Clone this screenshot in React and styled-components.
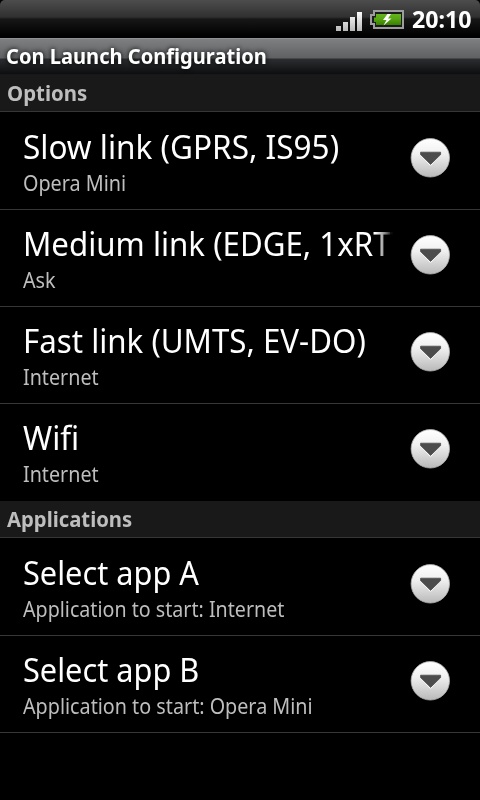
import React from 'react';
import styled, { createGlobalStyle } from 'styled-components';

const GlobalStyle = createGlobalStyle`
  body {
    margin: 0;
    background: #000000;
    font-family: 'Noto Sans', sans-serif;
    overflow: hidden;
  }
`;

const Screen = styled.div`
  width: 480px;
  height: 800px;
  background: #000000;
  overflow: hidden;
`;

const StatusBar = styled.div`
  height: 38px;
  box-sizing: border-box;
  padding-right: 9px;
  display: flex;
  justify-content: flex-end;
  align-items: center;
  border-radius: 5px 5px 0 0;
  background: linear-gradient(#4d4d4d 0px, #303030 17px, #171717 19px, #000000 36px);
`;

const Signal = styled.svg`
  width: 27px;
  height: 20px;
  margin-top: 4px;
  margin-right: 7px;
`;

const Battery = styled.svg`
  width: 34px;
  height: 20px;
  margin-top: 2px;
  margin-right: 8px;
`;

const Fit = styled.span`
  display: inline-block;
  transform: scaleX(${({ $fit }) => $fit || 1});
  transform-origin: left center;
  white-space: nowrap;
`;

const Clock = styled.div`
  width: 59px;
  height: 38px;
  font-size: 24px;
  font-weight: 700;
  line-height: 38px;
  color: #FFFFFF;
`;

const TitleBar = styled.div`
  height: 37px;
  box-sizing: border-box;
  padding-left: 6px;
  border-top: 1px solid #8f9192;
  background: linear-gradient(#7d7f80 0px, #5f6163 19px, #2b2d30 20px, #0c0e0f 35px, #202222 36px);
  font-size: 21px;
  font-weight: 700;
  line-height: 34px;
  color: #FFFFFF;
  text-shadow: 0px 0px 5px #000000;
`;

const Category = styled.div`
  height: 37px;
  box-sizing: border-box;
  margin-bottom: 1px;
  padding-left: 7px;
  background: #191919;
  border-bottom: 1px solid #363636;
  font-size: 21px;
  font-weight: 700;
  line-height: 37px;
  color: #BEBEBE;
`;

const Row = styled.div`
  height: 97px;
  box-sizing: border-box;
  padding: 0 29px 0 23px;
  display: flex;
  justify-content: space-between;
  border-bottom: 1px solid ${({ $last }) => ($last ? '#000000' : '#363636')};
`;

const Texts = styled.div`
  width: 370px;
  padding-top: 12px;
  overflow: hidden;
  mask-image: linear-gradient(to right, #000 0, #000 352px, rgba(0, 0, 0, 0.6) 361px, transparent 370px);
`;

const RowTitle = styled.div`
  height: 44px;
  font-size: 33px;
  line-height: 44px;
  color: #FFFFFF;
`;

const Summary = styled.div`
  height: 28px;
  font-size: 21px;
  line-height: 28px;
  color: #BEBEBE;
`;

const Arrow = styled.svg`
  width: 42px;
  height: 42px;
  margin-top: 24px;
  flex: none;
`;

const ArrowButton = () => (
    <Arrow viewBox="0 0 42 42">
        <defs>
            <linearGradient id="disc" x1="0" y1="0" x2="0" y2="1">
                <stop offset="0" stopColor="#ffffff" />
                <stop offset="0.4" stopColor="#f0f0f0" />
                <stop offset="1" stopColor="#b9b9b9" />
            </linearGradient>
        </defs>
        <circle cx="21.3" cy="20.8" r="19.2" fill="url(#disc)" stroke="#b4b4b4" strokeWidth="0.8" />
        <path d="M12 17.5 L21 27.5 Q21.5 28 22 27.5 L31 17.5" fill="none" stroke="#ffffff" strokeWidth="1.5" />
        <path d="M11.6 15.2 H31.6 V17.6 L21.6 27.4 L11.6 17.6 Z" fill="#4c4c4c" stroke="#4c4c4c" strokeWidth="0.8" strokeLinejoin="round" />
    </Arrow>
);

const SignalIcon = () => (
    <Signal viewBox="0 0 27 20">
        <defs>
            <linearGradient id="bars" x1="0" y1="0" x2="0" y2="20" gradientUnits="userSpaceOnUse">
                <stop offset="0" stopColor="#ffffff" />
                <stop offset="1" stopColor="#b8b8b8" />
            </linearGradient>
        </defs>
        <path d="M0 15h5v5h-5z M7 11h5v9h-5z M14 6h5v14h-5z M21 1h5v19h-5z" fill="url(#bars)" />
    </Signal>
);

const BatteryIcon = () => (
    <Battery viewBox="0 0 34 20">
        <defs>
            <linearGradient id="charge" x1="0" y1="0" x2="0" y2="1">
                <stop offset="0" stopColor="#67b421" />
                <stop offset="0.45" stopColor="#58a512" />
                <stop offset="1" stopColor="#388000" />
            </linearGradient>
        </defs>
        <path d="M4 1 H33 V18 H4 V14 H1 V5 H4 Z" fill="#1c1c1c" stroke="#9d9d9d" strokeWidth="2" />
        <path d="M6 4 H31 V15 H6 V12 H4 V7.5 H6 Z" fill="url(#charge)" />
        <path d="M17.5 4 L13 10 H16.5 L13.5 15.5 L21.5 8.5 H18 L21 4 Z" fill="#ffffff" />
    </Battery>
);

const links = [
    { title: 'Slow link (GPRS, IS95)', titleFit: 0.955, summary: 'Opera Mini', summaryFit: 0.942 },
    { title: 'Medium link (EDGE, 1xRTT)', titleFit: 0.947, summary: 'Ask', summaryFit: 0.94 },
    { title: 'Fast link (UMTS, EV-DO)', titleFit: 0.947, summary: 'Internet', summaryFit: 0.938 },
    { title: 'Wifi', titleFit: 0.95, summary: 'Internet', summaryFit: 0.938 },
];

const apps = [
    { title: 'Select app A', titleFit: 0.931, summary: 'Application to start: Internet', summaryFit: 0.936 },
    { title: 'Select app B', titleFit: 0.931, summary: 'Application to start: Opera Mini', summaryFit: 0.94 },
];

const Preference = ({ item, last }) => (
    <Row $last={last}>
        <Texts>
            <RowTitle><Fit $fit={item.titleFit}>{item.title}</Fit></RowTitle>
            <Summary><Fit $fit={item.summaryFit}>{item.summary}</Fit></Summary>
        </Texts>
        <ArrowButton />
    </Row>
);

const App = () => {
    return (
        <>
            <GlobalStyle />
            <Screen>
                <StatusBar>
                    <SignalIcon />
                    <BatteryIcon />
                    <Clock><Fit $fit={0.965}>20:10</Fit></Clock>
                </StatusBar>
                <TitleBar><Fit $fit={0.957}>Con Launch Configuration</Fit></TitleBar>
                <Category><Fit $fit={0.972}>Options</Fit></Category>
                {links.map((item, i) => (
                    <Preference key={item.title} item={item} last={i === links.length - 1} />
                ))}
                <Category><Fit $fit={0.965}>Applications</Fit></Category>
                {apps.map((item) => (
                    <Preference key={item.title} item={item} />
                ))}
            </Screen>
        </>
    );
};

export default App;
